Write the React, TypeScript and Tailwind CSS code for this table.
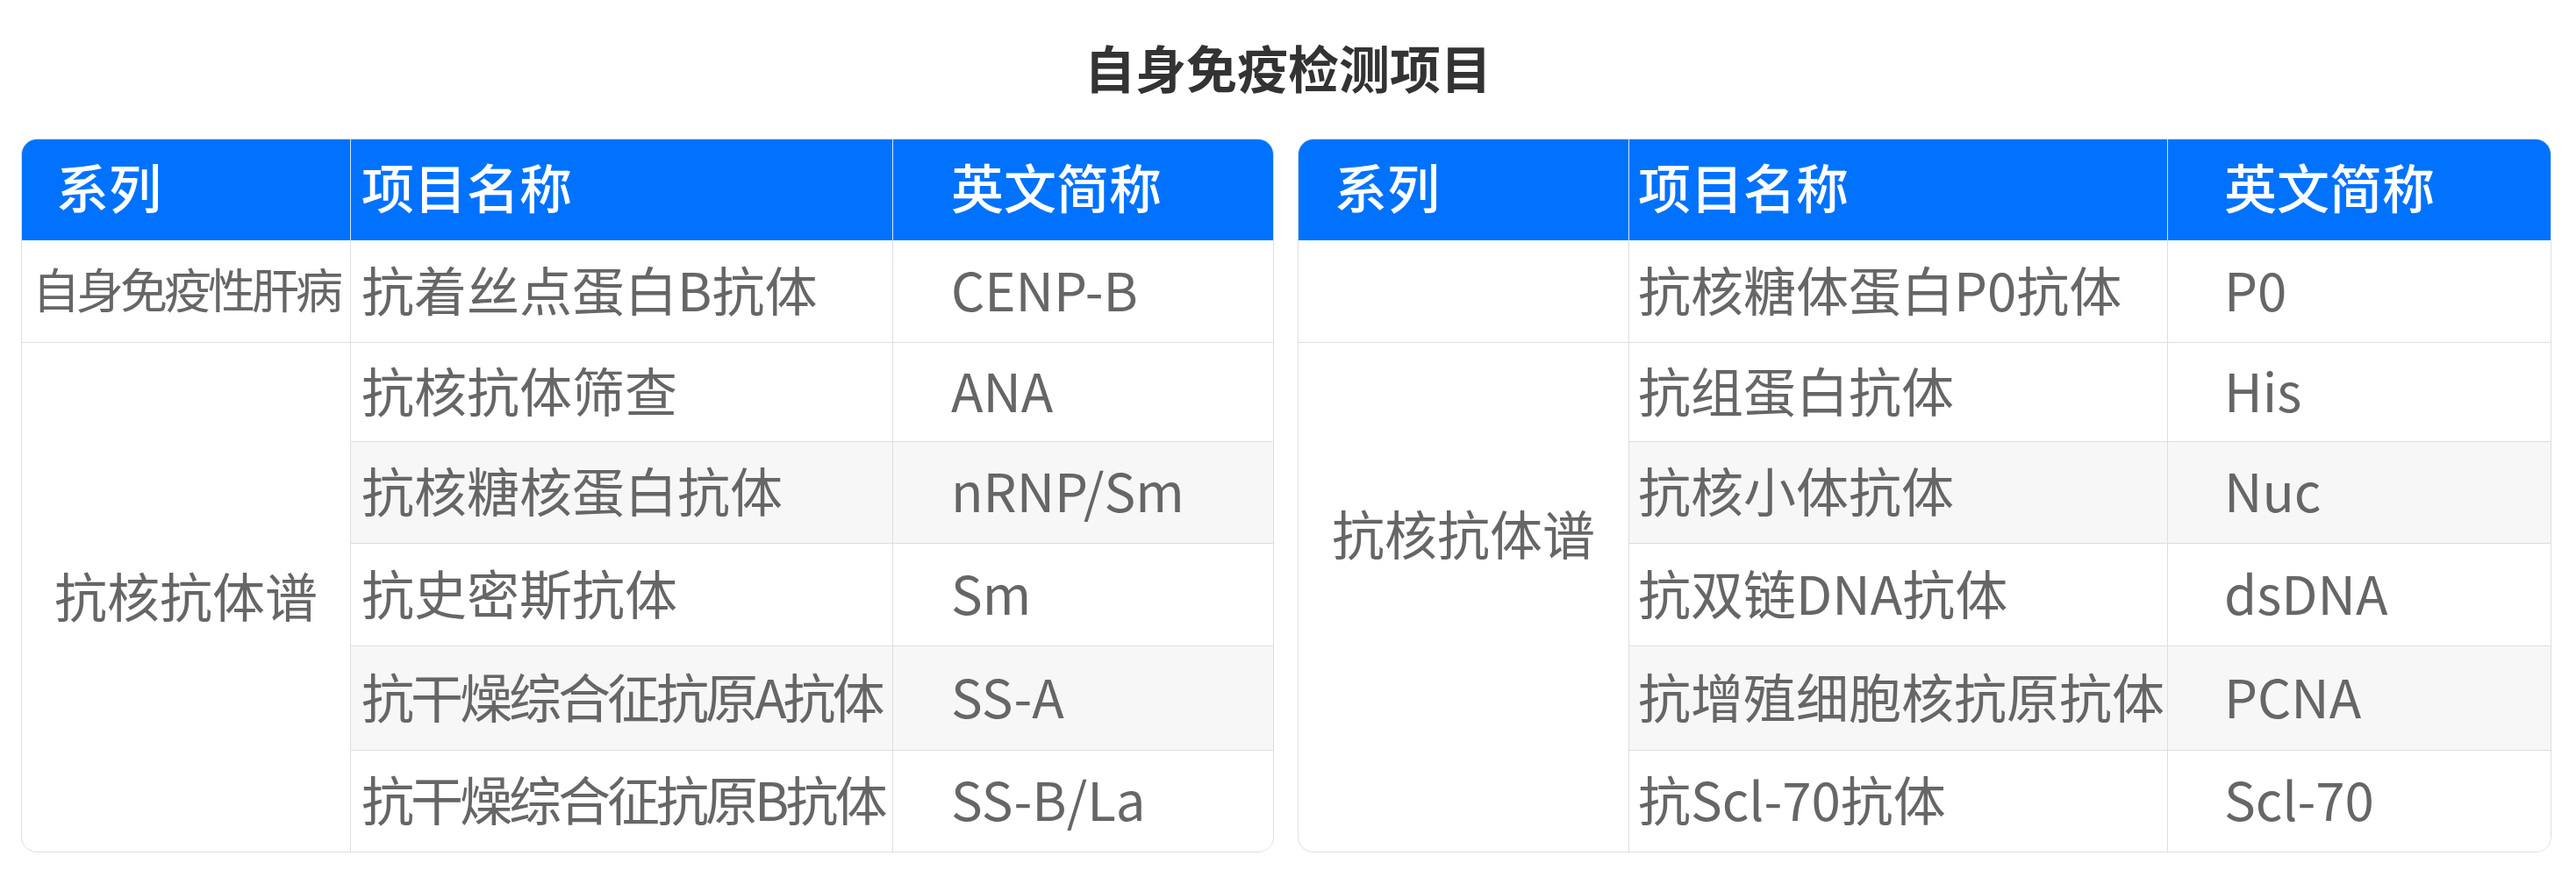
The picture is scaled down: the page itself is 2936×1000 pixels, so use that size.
import React from 'react';

type Row = { name: string; abbr: string; tight?: boolean };

const leftRows: Row[] = [
  { name: '抗着丝点蛋白B抗体', abbr: 'CENP-B' },
  { name: '抗核抗体筛查', abbr: 'ANA' },
  { name: '抗核糖核蛋白抗体', abbr: 'nRNP/Sm' },
  { name: '抗史密斯抗体', abbr: 'Sm' },
  { name: '抗干燥综合征抗原A抗体', abbr: 'SS-A', tight: true },
  { name: '抗干燥综合征抗原B抗体', abbr: 'SS-B/La', tight: true },
];

const rightRows: Row[] = [
  { name: '抗核糖体蛋白P0抗体', abbr: 'P0' },
  { name: '抗组蛋白抗体', abbr: 'His' },
  { name: '抗核小体抗体', abbr: 'Nuc' },
  { name: '抗双链DNA抗体', abbr: 'dsDNA' },
  { name: '抗增殖细胞核抗原抗体', abbr: 'PCNA' },
  { name: '抗Scl-70抗体', abbr: 'Scl-70' },
];

const cell = 'flex items-center whitespace-nowrap pb-[7px] border-[#dedede]';
const head = 'flex items-center pb-[10px] bg-[#0172fe] text-white font-medium';

const DataRows = ({ rows, namePad, abbrPad }: { rows: Row[]; namePad: string; abbrPad: string }) => (
  <>
    {rows.map((r, i) => {
      const stripe = i % 2 === 1 ? 'bg-[#f7f7f7]' : 'bg-white';
      const last = i === rows.length - 1 ? '' : 'border-b';
      return (
        <React.Fragment key={r.abbr}>
          <div className={`${cell} ${stripe} ${last} border-r ${namePad} ${r.tight ? 'tracking-[-4px]' : ''}`}>
            {r.name}
          </div>
          <div className={`${cell} ${stripe} ${last} ${abbrPad}`}>{r.abbr}</div>
        </React.Fragment>
      );
    })}
  </>
);

const Header = ({ pads }: { pads: [string, string, string] }) => (
  <>
    <div className={`${head} border-r border-[#d6e6ff] ${pads[0]}`}>系列</div>
    <div className={`${head} border-r border-[#d6e6ff] ${pads[1]}`}>项目名称</div>
    <div className={`${head} ${pads[2]}`}>英文简称</div>
  </>
);

export default function App() {
  return (
    <div
      className="w-[2936px] h-[1000px] bg-white text-[#666] text-[60px] leading-none"
      style={{ fontFamily: '"Noto Sans CJK SC", "Noto Sans", sans-serif' }}
    >
      <div className="h-[158px] flex items-center justify-center pb-[6px]">
        <h1 className="text-[58px] font-bold text-[#333]">自身免疫检测项目</h1>
      </div>

      <div className="flex items-start gap-[27px] px-6">
        {/* left table */}
        <div className="w-[1428px] grid grid-cols-[375px_618px_1fr] grid-rows-[115px_117px_580px] border border-[#dedede] rounded-[18px] overflow-hidden">
          <Header pads={['pl-[39px]', 'pl-[12px]', 'pl-[66px]']} />
          <div className={`${cell} justify-center border-b border-r text-[54px] tracking-[-4px]`}>自身免疫性肝病</div>
          <div className={`${cell} border-b border-r pl-[12px]`}>{leftRows[0].name}</div>
          <div className={`${cell} border-b pl-[66px]`}>{leftRows[0].abbr}</div>
          <div className={`${cell} justify-center border-r`}>抗核抗体谱</div>
          <div className="col-span-2 grid grid-cols-[618px_1fr] grid-rows-[113px_116px_117px_119px_115px]">
            <DataRows rows={leftRows.slice(1)} namePad="pl-[12px]" abbrPad="pl-[66px]" />
          </div>
        </div>

        {/* right table */}
        <div className="w-[1429px] grid grid-cols-[377px_614px_1fr] grid-rows-[115px_117px_580px] border border-[#dedede] rounded-[18px] overflow-hidden">
          <Header pads={['pl-[41px]', 'pl-[10px]', 'pl-[64px]']} />
          <div className={`${cell} border-b border-r`} />
          <div className={`${cell} border-b border-r pl-[10px]`}>{rightRows[0].name}</div>
          <div className={`${cell} border-b pl-[64px]`}>{rightRows[0].abbr}</div>
          <div className={`${cell} justify-center border-r pb-[148px]`}>抗核抗体谱</div>
          <div className="col-span-2 grid grid-cols-[614px_1fr] grid-rows-[113px_116px_117px_119px_115px]">
            <DataRows rows={rightRows.slice(1)} namePad="pl-[10px]" abbrPad="pl-[64px]" />
          </div>
        </div>
      </div>
    </div>
  );
}
